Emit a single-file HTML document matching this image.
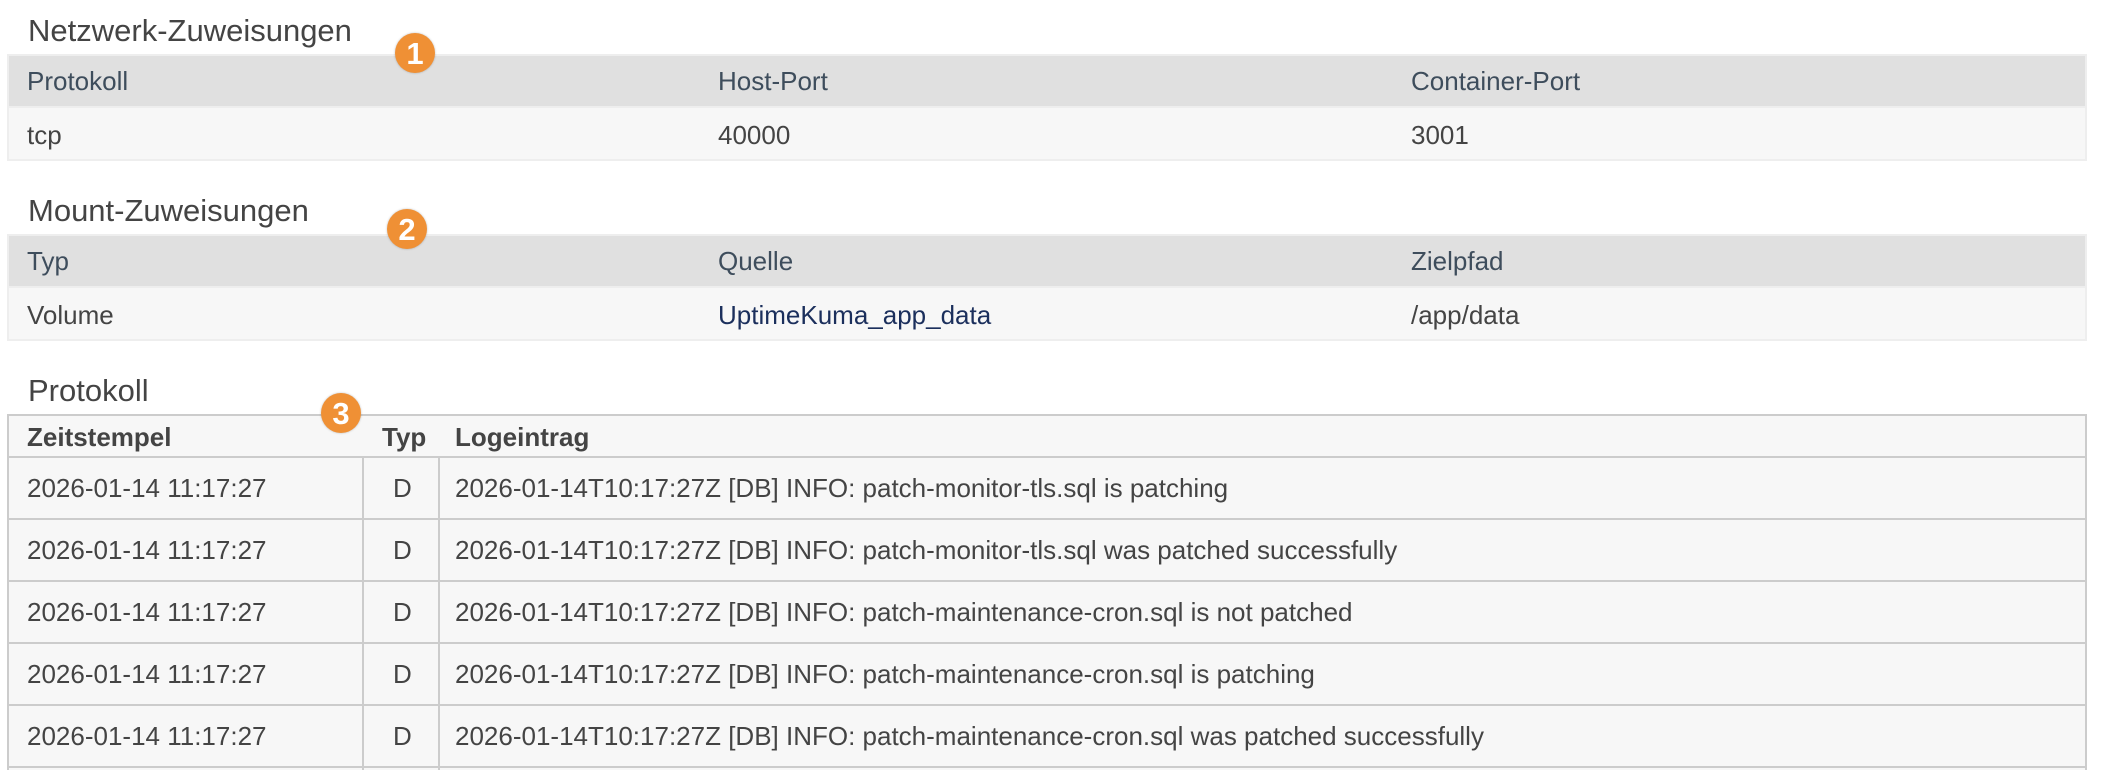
<!DOCTYPE html>
<html><head><meta charset="utf-8"><style>
html,body{margin:0;width:2114px;height:770px;overflow:hidden}
body{background:#fff;position:relative;font-family:"Liberation Sans",Arial,sans-serif;color:#444}
.a{position:absolute}
.h{font-size:31px;color:#444;left:28px;line-height:1}
.t{position:absolute;left:7px;width:2080px;box-sizing:border-box;border:2px solid #eee}
.t .hd{background:#e0e0e0;height:50px;position:relative;border-bottom:2px solid #eee}
.t .bd{background:#f7f7f7;height:51px;position:relative}
.c{position:absolute;font-size:26px;white-space:nowrap}
.hd .c{color:#3e4d5c;top:10px}
.bd .c{top:12px}
.badge{position:absolute;width:40px;height:40px;border-radius:50%;background:#ef9035;color:#fff;font-weight:bold;font-size:31px;text-align:center;line-height:41px;box-shadow:0 0 2px rgba(0,0,0,.25)}
.lt{position:absolute;left:7px;width:2080px;top:414px;height:356px;box-sizing:border-box;border:2px solid #ccc;border-bottom:none;background:#f7f7f7;overflow:hidden}
.row{position:absolute;left:0;right:0;height:62px;border-top:2px solid #ccc;box-sizing:border-box}
.v{position:absolute;top:0;bottom:0;width:2px;background:#ccc}
.lt .c{top:15px;color:#444}
</style></head><body>
<div class="a h" style="top:15px">Netzwerk-Zuweisungen</div>
<div class="t" style="top:54px">
 <div class="hd"><span class="c" style="left:18px">Protokoll</span><span class="c" style="left:709px">Host-Port</span><span class="c" style="left:1402px">Container-Port</span></div>
 <div class="bd"><span class="c" style="left:18px">tcp</span><span class="c" style="left:709px">40000</span><span class="c" style="left:1402px">3001</span></div>
</div>
<div class="badge" style="left:395px;top:33px">1</div>

<div class="a h" style="top:195px">Mount-Zuweisungen</div>
<div class="t" style="top:234px">
 <div class="hd"><span class="c" style="left:18px">Typ</span><span class="c" style="left:709px">Quelle</span><span class="c" style="left:1402px">Zielpfad</span></div>
 <div class="bd"><span class="c" style="left:18px">Volume</span><span class="c" style="left:709px;color:#1b2f5c">UptimeKuma_app_data</span><span class="c" style="left:1402px">/app/data</span></div>
</div>
<div class="badge" style="left:387px;top:209px">2</div>

<div class="a h" style="top:375px">Protokoll</div>
<div class="lt">
 <span class="c" style="left:18px;top:6px;font-weight:bold">Zeitstempel</span>
 <span class="c" style="left:373px;top:6px;font-weight:bold">Typ</span>
 <span class="c" style="left:446px;top:6px;font-weight:bold">Logeintrag</span>
 <div class="row" style="top:40px"><span class="c" style="left:18px">2026-01-14 11:17:27</span><span class="c" style="left:384px">D</span><span class="c" style="left:446px">2026-01-14T10:17:27Z [DB] INFO: patch-monitor-tls.sql is patching</span></div>
 <div class="row" style="top:102px"><span class="c" style="left:18px">2026-01-14 11:17:27</span><span class="c" style="left:384px">D</span><span class="c" style="left:446px">2026-01-14T10:17:27Z [DB] INFO: patch-monitor-tls.sql was patched successfully</span></div>
 <div class="row" style="top:164px"><span class="c" style="left:18px">2026-01-14 11:17:27</span><span class="c" style="left:384px">D</span><span class="c" style="left:446px">2026-01-14T10:17:27Z [DB] INFO: patch-maintenance-cron.sql is not patched</span></div>
 <div class="row" style="top:226px"><span class="c" style="left:18px">2026-01-14 11:17:27</span><span class="c" style="left:384px">D</span><span class="c" style="left:446px">2026-01-14T10:17:27Z [DB] INFO: patch-maintenance-cron.sql is patching</span></div>
 <div class="row" style="top:288px;height:80px"><span class="c" style="left:18px">2026-01-14 11:17:27</span><span class="c" style="left:384px">D</span><span class="c" style="left:446px">2026-01-14T10:17:27Z [DB] INFO: patch-maintenance-cron.sql was patched successfully</span></div>
 <div class="row" style="top:350px;height:20px"></div>
 <div class="v" style="left:353px;top:40px"></div>
 <div class="v" style="left:429px;top:40px"></div>
</div>
<div class="badge" style="left:321px;top:393px">3</div>
</body></html>
